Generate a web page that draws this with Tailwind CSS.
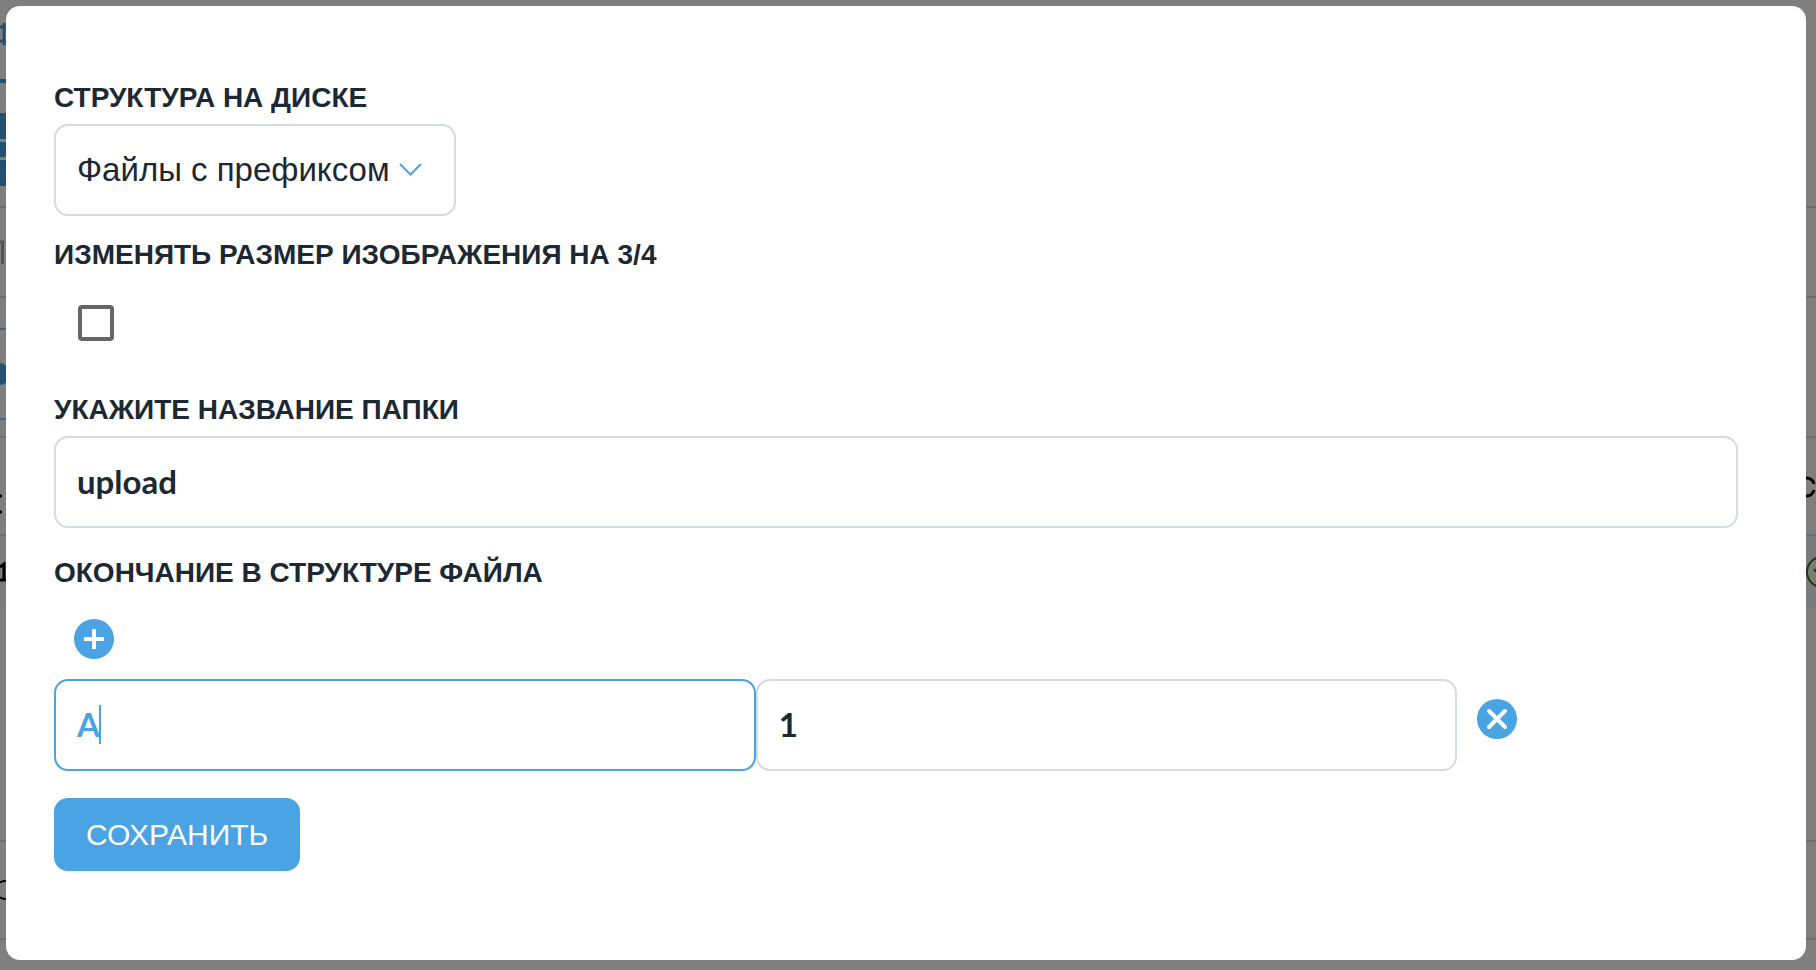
<!DOCTYPE html>
<html lang="ru">
<head>
  <meta charset="UTF-8">
  <meta name="viewport" content="width=device-width, initial-scale=1.0">
  <title>Настройки выгрузки</title>
  <script src="https://cdn.jsdelivr.net/npm/@tailwindcss/browser@4"></script>
</head>
<body class="relative min-h-screen overflow-x-hidden bg-white font-['Liberation_Sans',Arial,sans-serif] text-[#1c2833]">

  <!-- page under the dialog -->
  <div aria-hidden="true" class="absolute inset-0 flex flex-col overflow-hidden">
    <div class="flex h-[79px] shrink-0 items-center pb-3">
      <svg class="h-[22px] w-[6px]" viewBox="0 0 6 22" fill="none" stroke="#4aa3e2" stroke-width="3"><path d="M0 4h6M0 18h6M4 0v22" /></svg>
    </div>
    <div class="h-1 w-32 shrink-0 bg-[#4aa3e2]"></div>
    <div class="mt-[30px] flex shrink-0 flex-col items-start">
      <div class="h-[26px] w-32 bg-[#4aa3e2]"></div>
      <div class="my-[3px] h-[15px] w-32 bg-[#4aa3e2]"></div>
      <div class="h-[26px] w-32 bg-[#4aa3e2]"></div>
    </div>
    <div class="mt-5 flex h-[92px] shrink-0 items-center border-y-2 border-[#d5dbdf]">
      <svg class="h-6 w-[4px]" viewBox="0 0 4 24" fill="none" stroke="#a8a8a8" stroke-width="3"><path d="M0 2h2.500v22" /></svg>
    </div>
    <div class="mt-[30px] flex h-[92px] w-32 shrink-0 items-center border-y-2 border-[#8fc8f0]">
      <div class="h-[22px] w-2 rounded-r-lg bg-[#4aa3e2]"></div>
    </div>
    <div class="mt-4 flex h-[98px] shrink-0 items-start justify-between border-t-2 border-[#dddddd]">
      <svg class="mt-14 h-5 w-[2px]" viewBox="0 0 2 20" fill="none" stroke="#000" stroke-width="3"><path d="M0 2h2M0 18h2" /></svg>
      <svg class="mt-[38px] h-[22px] w-[10px]" viewBox="0 0 10 22" fill="none" stroke="#000" stroke-width="3"><path d="M0 2C4 2 7 4 8 8M0 20C4 20 7 18 8 14" /></svg>
    </div>
    <div class="flex h-[74px] shrink-0 items-center justify-between border-t-2 border-[#dddddd] bg-[#f2f6fa]">
      <svg class="h-5 w-[6px]" viewBox="0 0 6 20" fill="none" stroke="#000" stroke-width="3"><path d="M0 5l4-3v16M0 18h6" /></svg>
      <svg class="h-[32px] w-[10px]" viewBox="0 0 10 32" fill="none" stroke="#2b7a0b" stroke-width="2"><circle cx="16" cy="16" r="15" /><path d="M8 13l5 6" /></svg>
    </div>
    <div class="mt-[232px] flex h-[98px] shrink-0 items-center border-t-2 border-[#dddddd]">
      <svg class="h-5 w-[6px]" viewBox="0 0 6 20" fill="none" stroke="#000" stroke-width="2"><path d="M0 3C1 1 4 1 6 1M0 17c1 2 4 2 6 2" /></svg>
    </div>
    <div class="h-8 shrink-0 border-t-2 border-[#dddddd]"></div>
  </div>

  <!-- dialog -->
  <div class="relative min-h-screen bg-black/50 pt-[6px] pr-[10px] pb-[10px] pl-[6px]">
    <form class="min-h-[954px] rounded-[14px] bg-white pt-[74px] pr-[68px] pb-[88px] pl-12">
      <label for="structure" class="block h-[44px] text-[28px] leading-[36px] font-bold">СТРУКТУРА НА ДИСКЕ</label>
      <div class="relative inline-block h-[92px] align-top">
        <select id="structure" class="h-[92px] w-[402px] appearance-none rounded-[14px] border-2 border-[#d5dbdf] bg-white pl-[21px] text-[33px]">
          <option>Файлы с префиксом</option>
        </select>
        <svg class="pointer-events-none absolute top-[39px] right-[34px] h-[14px] w-[23px]" viewBox="0 0 23 14" fill="none" stroke="#4aa3e2" stroke-width="2"><path d="M1 1l10.500 10.500L22 1" /></svg>
      </div>

      <label for="resize" class="mt-[21px] block text-[28px] leading-[36px] font-bold">ИЗМЕНЯТЬ РАЗМЕР ИЗОБРАЖЕНИЯ НА 3/4</label>
      <input id="resize" type="checkbox" class="mt-8 ml-6 block size-9 appearance-none rounded-[4px] border-4 border-[#666666] bg-white">

      <label for="folder" class="mt-[51px] block h-[44px] text-[28px] leading-[36px] font-bold">УКАЖИТЕ НАЗВАНИЕ ПАПКИ</label>
      <input id="folder" type="text" value="upload" class="block h-[92px] w-full rounded-[14px] border-2 border-[#d5dbdf] px-[21px] pb-[2px] font-['Lato',sans-serif] text-[33px] font-bold">

      <h2 class="mt-[27px] text-[28px] leading-[36px] font-bold">ОКОНЧАНИЕ В СТРУКТУРЕ ФАЙЛА</h2>
      <button type="button" aria-label="Добавить" class="mt-7 ml-5 block size-10">
        <svg class="size-10" viewBox="0 0 40 40" fill="none"><circle cx="20" cy="20" r="20" fill="#4aa3e2" /><path d="M20 10v20M10 20h20" stroke="#fff" stroke-width="4" /></svg>
      </button>
      <div class="mt-5 flex items-start">
        <div class="flex w-5/6 shrink-0">
          <div class="relative w-1/2">
            <input type="text" value="A" aria-label="Окончание" class="block h-[92px] w-full rounded-[14px] border-2 border-[#4aa3e2] px-[21px] pb-[2px] font-['Lato',sans-serif] text-[33px] font-bold text-[#4aa3e2] caret-[#4aa3e2] outline-none">
            <span class="pointer-events-none absolute top-[26px] left-[45px] h-[39px] w-[2px] bg-[#4aa3e2]"></span>
          </div>
          <input type="text" value="1" aria-label="Значение" class="h-[92px] w-1/2 rounded-[14px] border-2 border-[#d5dbdf] px-[21px] pb-[2px] font-['Lato',sans-serif] text-[33px] font-bold">
        </div>
        <button type="button" aria-label="Удалить" class="mt-5 ml-5 size-10 shrink-0">
          <svg class="size-10" viewBox="0 0 40 40" fill="none"><circle cx="20" cy="20" r="20" fill="#4aa3e2" /><path d="M12 12l16 16M28 12L12 28" stroke="#fff" stroke-width="4" stroke-linecap="round" /></svg>
        </button>
      </div>
      <button type="submit" class="mt-[27px] block h-[73px] rounded-[14px] bg-[#4aa3e2] px-8 text-[30px] text-white">СОХРАНИТЬ</button>
    </form>
  </div>
</body>
</html>
